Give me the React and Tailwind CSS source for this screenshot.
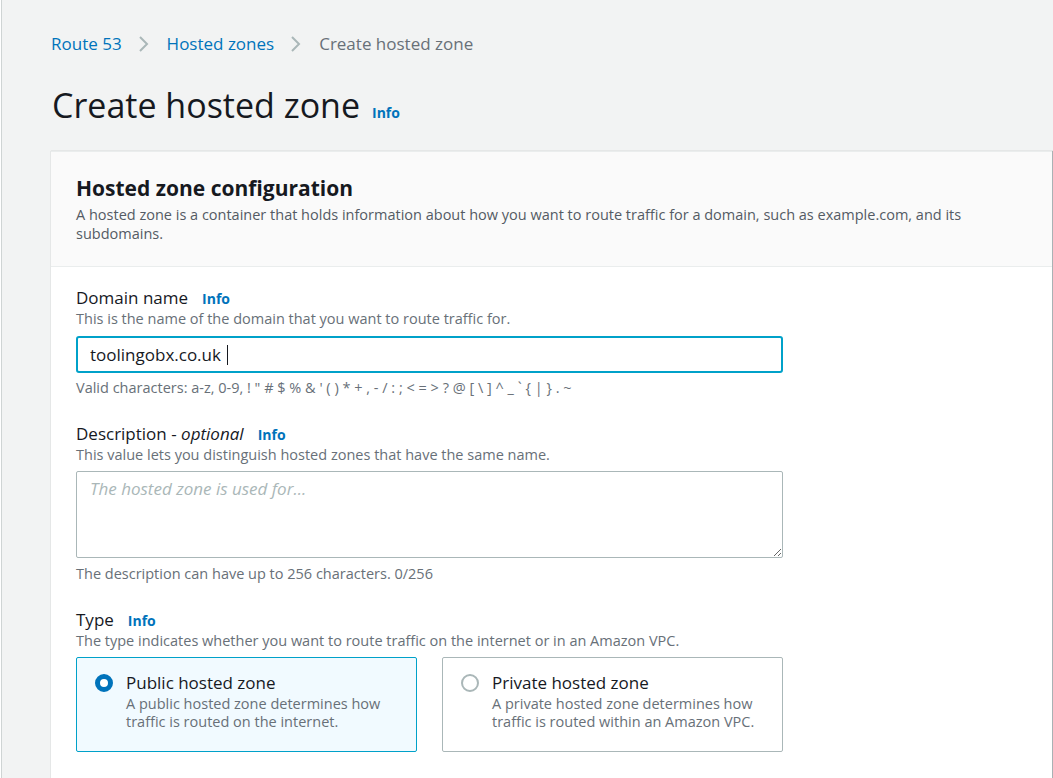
import { useState } from "react";

function Chevron() {
  return (
    <svg width="12" height="20" viewBox="0 0 12 20" className="ml-[16px] mr-[17px]">
      <path d="M2 3 L9 10 L2 17" fill="none" stroke="#aab7b8" strokeWidth="2" />
    </svg>
  );
}

function Info({ className = "ml-[14px]" }) {
  return <span className={className + " text-[14px] font-bold text-[#0073bb]"}>Info</span>;
}

function Tile({ selected, title, lines, onClick }) {
  return (
    <div
      onClick={onClick}
      className={
        selected
          ? "flex w-[341px] h-[95px] cursor-pointer rounded-[2px] border border-[#00a1c9] bg-[#f1faff] pl-[18px] pt-[14px]"
          : "flex w-[341px] h-[95px] cursor-pointer rounded-[2px] border border-[#aab7b8] bg-white pl-[18px] pt-[14px]"
      }
    >
      <div className="mt-[2px]">
        {selected ? (
          <div className="h-[18px] w-[18px] rounded-full border-[5px] border-[#0073bb] bg-white" />
        ) : (
          <div className="h-[18px] w-[18px] rounded-full border-2 border-[#aab7b8] bg-white" />
        )}
      </div>
      <div className="ml-[13px]">
        <div className="text-[17px] leading-[22px] text-[#16191f]">{title}</div>
        <div className="mt-[1px] text-[14.5px] leading-[18px] text-[#687078]">
          {lines.map((l) => (
            <div key={l}>{l}</div>
          ))}
        </div>
      </div>
    </div>
  );
}

const font = { fontFamily: '"Open Sans", "Liberation Sans", sans-serif' };

export default function App() {
  const [domain, setDomain] = useState("toolingobx.co.uk");
  const [type, setType] = useState("public");

  return (
    <div className="min-h-screen bg-white pl-px" style={font}>
      <div className="min-h-screen border-l border-[#cfd4d4] bg-[#f2f3f3] pl-[49px] pr-[1px]">
        <div className="flex items-center pt-[33px] text-[17px] leading-[22px]">
          <span className="text-[#0073bb]">Route 53</span>
          <Chevron />
          <span className="text-[#0073bb]">Hosted zones</span>
          <Chevron />
          <span className="text-[#687078]">Create hosted zone</span>
        </div>

        <div className="mt-[30px] flex items-baseline pl-[1px]">
          <h1 className="text-[34px] leading-[40px] text-[#16191f]">Create hosted zone</h1>
          <Info className="ml-[12px]" />
        </div>

        <div className="mt-[26px] border-t border-[#eaeded] bg-white shadow-[1px_1px_1px_1px_rgba(0,28,36,0.3)]">
          <div className="border-b border-[#eaeded] bg-[#fafafa] px-[25px] pt-[22px] pb-[23px]">
            <h2 className="text-[21px] font-bold leading-[28px] text-[#16191f]">Hosted zone configuration</h2>
            <p className="mt-[3px] text-[14.5px] leading-[19px] text-[#545b64]">
              A hosted zone is a container that holds information about how you want to route traffic for a domain, such as example.com, and its
              <br />
              subdomains.
            </p>
          </div>

          <div className="px-[25px] pt-[20px] pb-[30px]">
            <div className="flex items-baseline">
              <span className="text-[17px] leading-[22px] text-[#16191f]">Domain name</span>
              <Info />
            </div>
            <p className="text-[14.5px] leading-[20px] text-[#687078]">This is the name of the domain that you want to route traffic for.</p>
            <div className="relative mt-[7px] w-[707px]">
              <input
                value={domain}
                onChange={(e) => setDomain(e.target.value)}
                className="block h-[37px] w-full rounded-[3px] border-2 border-[#00a1c9] bg-white px-[12px] text-[17px] text-[#16191f] outline-none"
                style={font}
              />
              <span className="pointer-events-none absolute left-[151px] top-[9px] h-[20px] w-px bg-[#16191f]" />
            </div>
            <p className="mt-[5px] text-[14.5px] leading-[20px] text-[#687078]">
              Valid characters: a-z, 0-9, ! " # $ % &amp; ' ( ) * + , - / : ; &lt; = &gt; ? @ [ \ ] ^ _ ` {"{"} | {"}"} . ~
            </p>

            <div className="mt-[25px] flex items-baseline">
              <span className="text-[17px] leading-[22px] text-[#16191f]">
                Description - <i>optional</i>
              </span>
              <Info />
            </div>
            <p className="text-[14.5px] leading-[20px] text-[#687078]">This value lets you distinguish hosted zones that have the same name.</p>
            <textarea
              placeholder="The hosted zone is used for..."
              className="mt-[6px] block h-[87px] w-[707px] rounded-[2px] border border-[#aab7b8] bg-white px-[13px] py-[5px] text-[17px] leading-[24px] text-[#16191f] outline-none placeholder:italic placeholder:text-[#aab7b8]"
              style={font}
            />
            <p className="mt-[6px] text-[14.5px] leading-[20px] text-[#687078]">The description can have up to 256 characters. 0/256</p>

            <div className="mt-[25px] flex items-baseline">
              <span className="text-[17px] leading-[22px] text-[#16191f]">Type</span>
              <Info />
            </div>
            <p className="text-[14.5px] leading-[20px] text-[#687078]">The type indicates whether you want to route traffic on the internet or in an Amazon VPC.</p>
            <div className="mt-[6px] flex gap-[25px]">
              <Tile
                selected={type === "public"}
                onClick={() => setType("public")}
                title="Public hosted zone"
                lines={["A public hosted zone determines how", "traffic is routed on the internet."]}
              />
              <Tile
                selected={type === "private"}
                onClick={() => setType("private")}
                title="Private hosted zone"
                lines={["A private hosted zone determines how", "traffic is routed within an Amazon VPC."]}
              />
            </div>
          </div>
        </div>
      </div>
    </div>
  );
}
